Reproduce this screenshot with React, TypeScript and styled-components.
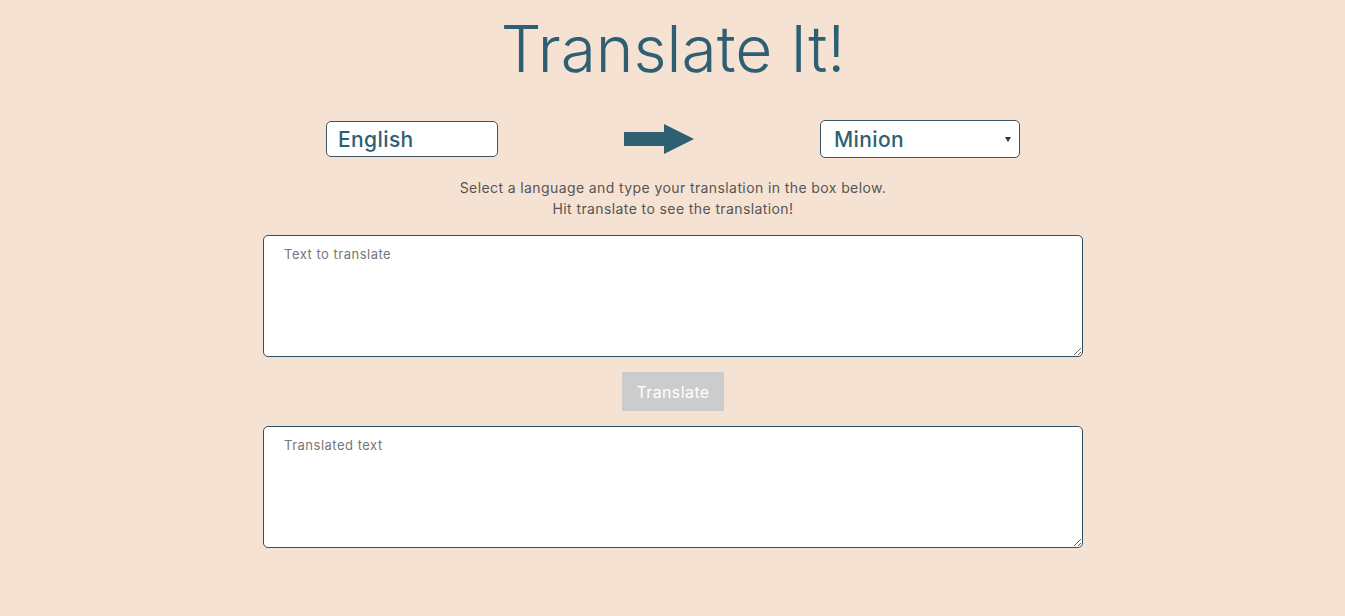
import React from "react";
import styled, { createGlobalStyle } from "styled-components";

const Global = createGlobalStyle`
  html, body { margin: 0; padding: 0; background: #f5e2d3; }
  body { font-family: Inter, "Open Sans", sans-serif; }
`;

const Page = styled.main`
  display: flex;
  flex-direction: column;
  align-items: center;
  padding-left: 1px;
  min-height: 616px;
  box-sizing: border-box;
`;

const Title = styled.h1`
  margin: 10px 0 0;
  font-family: Inter, sans-serif;
  font-weight: 300;
  font-size: 64px;
  line-height: 78px;
  letter-spacing: 0;
  color: #2f5f72;
`;

const LangRow = styled.div`
  display: flex;
  align-items: center;
  gap: 126px;
  margin-top: 32px;
`;

const LangInput = styled.input`
  box-sizing: border-box;
  width: 172px;
  height: 36px;
  padding: 0 11px;
  border: 1px solid #3c5563;
  border-radius: 5px;
  background: #fff;
  font-family: Inter, sans-serif;
  font-weight: 500;
  font-size: 21px;
  letter-spacing: 0.4px;
  color: #2f5f72;
  outline: none;
`;

const Select = styled.select`
  box-sizing: border-box;
  width: 200px;
  height: 38px;
  padding: 0 13px;
  border: 1px solid #3c5563;
  border-radius: 5px;
  background: #fff url("data:image/svg+xml;utf8,<svg xmlns='http://www.w3.org/2000/svg' width='6' height='6'><path d='M0 1h6L3 6z' fill='%23333'/></svg>") no-repeat right 8px center;
  appearance: none;
  font-family: Inter, sans-serif;
  font-weight: 500;
  font-size: 21px;
  letter-spacing: 0.4px;
  color: #2f5f72;
  outline: none;
`;

const ArrowIcon = styled.svg`
  display: block;
  width: 70px;
  height: 30px;
`;

const Hint = styled.p`
  margin: 19px 0 0;
  text-align: center;
  font-family: Inter, sans-serif;
  font-size: 14px;
  line-height: 21px;
  letter-spacing: 0.4px;
  color: #555;
`;

const TextBox = styled.textarea<{ $top: number }>`
  box-sizing: border-box;
  width: 820px;
  height: 122px;
  padding: 10px 20px;
  border: 1px solid #2f4f5f;
  border-radius: 5px;
  background: #fff;
  font-family: Inter, sans-serif;
  font-size: 13px;
  letter-spacing: 0.5px;
  color: #333;
  outline: none;
  margin-top: ${(p) => p.$top}px;
  &::placeholder { color: #777; }
`;

const Button = styled.button`
  margin-top: 15px;
  width: 102px;
  height: 39px;
  border: none;
  background: #cccccc;
  color: #fff;
  font-family: Inter, sans-serif;
  font-size: 16px;
  letter-spacing: 0.4px;
  cursor: default;
`;

export default function App() {
  return (
    <>
      <Global />
      <Page>
        <Title>Translate It!</Title>
        <LangRow>
          <LangInput defaultValue="English" readOnly />
          <ArrowIcon viewBox="0 0 70 30">
            <path d="M0 8h40V0l30 15-30 15v-8H0z" fill="#2f5f72" />
          </ArrowIcon>
          <Select defaultValue="minion">
            <option value="minion">Minion</option>
          </Select>
        </LangRow>
        <Hint>
          Select a language and type your translation in the box below.
          <br />
          Hit translate to see the translation!
        </Hint>
        <TextBox $top={16} placeholder="Text to translate" />
        <Button disabled>Translate</Button>
        <TextBox $top={15} placeholder="Translated text" />
      </Page>
    </>
  );
}
